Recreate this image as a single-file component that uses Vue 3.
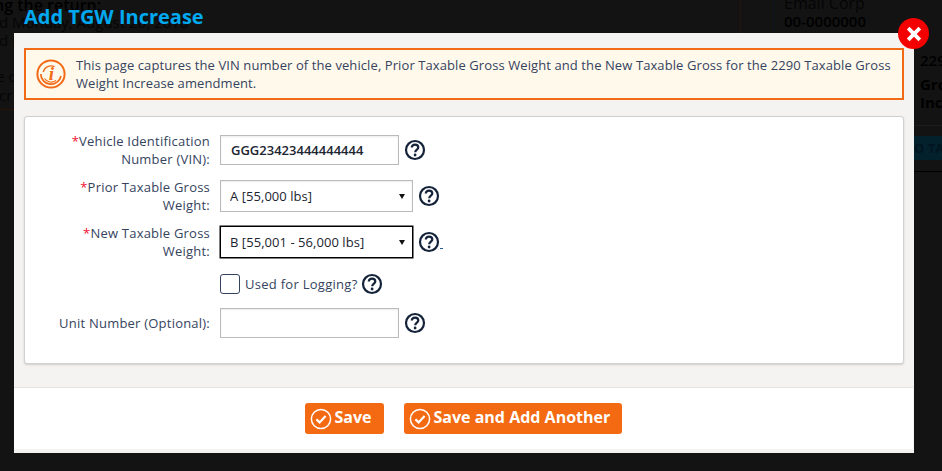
<template>
  <div class="page">
    <!-- dimmed page behind the dialog -->
    <div class="backdrop">
      <p class="bg-text bg-return">ng the return:</p>
      <p class="bg-text bg-date1">d Monday, August 20, 2018</p>
      <p class="bg-text bg-date2">d M</p>
      <p class="bg-text bg-line1">e c</p>
      <p class="bg-text bg-line2">cr</p>
      <div class="bg-rule"></div>
      <div class="bg-rule bg-rule-right"></div>
      <div class="bg-rule bg-rule-right2"></div>
      <div class="bg-divider"></div>
      <div class="bg-divider2"></div>
      <p class="bg-text bg-corp">Email Corp</p>
      <p class="bg-text bg-ein">00-0000000</p>
      <p class="bg-text bg-2290">2290</p>
      <p class="bg-text bg-gro">Gro</p>
      <p class="bg-text bg-inc">Incr</p>
      <div class="bg-btn">O TA</div>
    </div>

    <h1 class="title">Add TGW Increase</h1>

    <div class="modal">
      <button class="close" aria-label="Close">
        <svg width="16" height="16" viewBox="0 0 16 16">
          <path d="M2.2 2.2 L13.8 13.8 M13.8 2.2 L2.2 13.8" stroke="#fff" stroke-width="3.8" fill="none" />
        </svg>
      </button>

      <div class="modal-body">
        <div class="alert">
          <svg class="alert-icon" width="30" height="32" viewBox="0 0 30 32">
            <circle cx="15" cy="16" r="13.6" fill="none" stroke="#f26a16" stroke-width="2" />
            <path d="M4.8 16 A10.2 10.2 0 0 0 25 18" fill="none" stroke="#f26a16" stroke-width="1.7" />
            <path d="M7.2 14 A8.2 8.2 0 0 1 18.5 8.6" fill="none" stroke="#f26a16" stroke-width="1.3" />
            <path d="M8.5 20.5 A8 8 0 0 0 20 22.5" fill="none" stroke="#f26a16" stroke-width="1.1" />
            <text x="15.5" y="22" text-anchor="middle" class="alert-i">i</text>
          </svg>
          <p class="alert-text">This page captures the VIN number of the vehicle, Prior Taxable Gross Weight and the New Taxable Gross for the 2290 Taxable Gross Weight Increase amendment.</p>
        </div>

        <div class="panel">
          <div class="row row-vin">
            <label class="label"><span class="req">*</span>Vehicle Identification Number (VIN):</label>
            <input class="field field-input vin" type="text" value="GGG23423444444444" />
            <svg class="help" viewBox="0 0 22 22"><use href="#help-icon" /></svg>
          </div>

          <div class="row row-select row-prior">
            <label class="label"><span class="req">*</span>Prior Taxable Gross Weight:</label>
            <select class="field field-select">
              <option v-for="w in weights" :key="w" :selected="w === weights[0]">{{ w }}</option>
            </select>
            <svg class="help" viewBox="0 0 22 22"><use href="#help-icon" /></svg>
          </div>

          <div class="row row-select">
            <label class="label"><span class="req">*</span>New Taxable Gross Weight:</label>
            <select class="field field-select focused">
              <option v-for="w in weights" :key="w" :selected="w === weights[1]">{{ w }}</option>
            </select>
            <svg class="help" viewBox="0 0 22 22"><use href="#help-icon" /></svg>
            <span class="stray">&nbsp;</span>
          </div>

          <div class="row row-check">
            <span class="label"></span>
            <span class="checkbox"></span>
            <span class="check-label">Used for Logging?</span>
            <svg class="help" viewBox="0 0 22 22"><use href="#help-icon" /></svg>
          </div>

          <div class="row row-unit">
            <label class="label">Unit Number (Optional):</label>
            <input class="field field-input" type="text" />
            <svg class="help" viewBox="0 0 22 22"><use href="#help-icon" /></svg>
          </div>
        </div>
      </div>

      <div class="footer">
        <button class="btn btn-save">
          <svg class="btn-icon" viewBox="0 0 22 22"><use href="#ok-icon" /></svg><span class="btn-text">Save</span>
        </button>
        <button class="btn btn-another">
          <svg class="btn-icon" viewBox="0 0 22 22"><use href="#ok-icon" /></svg><span class="btn-text">Save and Add Another</span>
        </button>
      </div>
    </div>

    <!-- shared icons -->
    <svg class="defs" width="0" height="0">
      <defs>
        <g id="help-icon">
          <circle cx="11" cy="11" r="9" fill="#fff" stroke="#14233a" stroke-width="2.2" />
          <path d="M7.8 8.6 C7.8 6.7 9.3 5.6 11 5.6 C12.9 5.6 14.3 6.8 14.3 8.4 C14.3 10.5 11.2 10.6 11.2 13.2" fill="none" stroke="#14233a" stroke-width="2.2" />
          <circle cx="11.1" cy="16" r="1.4" fill="#14233a" />
        </g>
        <g id="ok-icon">
          <circle cx="11" cy="11" r="9.6" fill="none" stroke="#fff" stroke-width="1.5" />
          <path d="M6.4 11.4 L9.6 14.4 L15.6 8" fill="none" stroke="#fff" stroke-width="2.2" />
        </g>
      </defs>
    </svg>
  </div>
</template>

<script setup>
const weights = ['A [55,000 lbs]', 'B [55,001 - 56,000 lbs]']
</script>

<style>
html, body {
  margin: 0;
  background: #131313;
}
</style>

<style scoped>
.page {
  position: relative;
  width: 942px;
  height: 471px;
  overflow: hidden;
  background: #131313;
  font-family: "Open Sans", "DejaVu Sans", sans-serif;
  color: #2a3a52;
}

.backdrop {
  position: absolute;
  inset: 0;
}

.bg-text {
  position: absolute;
  margin: 0;
  font-size: 15px;
  line-height: 20px;
  white-space: nowrap;
  color: #050505;
}

.bg-return { left: -6px; top: -5px; font-size: 16px; font-weight: 600; color: #000; }
.bg-date1 { left: -1px; top: 12px; }
.bg-date2 { left: -1px; top: 30px; }
.bg-line1 { left: -4px; top: 66px; }
.bg-line2 { left: -1px; top: 85px; }
.bg-corp { left: 784px; top: -7px; font-size: 16px; }
.bg-ein { left: 784px; top: 11px; font-weight: 600; color: #000; }
.bg-2290 { left: 920px; top: 50px; font-weight: 600; color: #000; }
.bg-gro { left: 920px; top: 74px; font-weight: 700; color: #000; }
.bg-inc { left: 920px; top: 92px; font-weight: 700; color: #000; }

.bg-rule {
  position: absolute;
  left: 0;
  top: 109px;
  width: 14px;
  height: 1px;
  background: #2a1206;
}

.bg-rule-right {
  left: 914px;
  top: 125px;
  width: 28px;
  background: #1d1d1d;
}

.bg-rule-right2 {
  left: 914px;
  top: 171px;
  width: 28px;
  background: #000;
}

.bg-divider {
  position: absolute;
  left: 740px;
  top: 0;
  width: 1px;
  height: 33px;
  background: #24140a;
}

.bg-divider2 {
  position: absolute;
  left: 773px;
  top: 0;
  width: 1px;
  height: 33px;
  background: #0a1320;
}

.bg-btn {
  position: absolute;
  left: 914px;
  top: 136px;
  width: 28px;
  height: 24px;
  background: #03202d;
  color: #02151f;
  font-size: 13px;
  font-weight: 700;
  line-height: 24px;
  white-space: nowrap;
  overflow: hidden;
}

.title {
  position: relative;
  height: 33px;
  margin: 0;
  padding: 4px 0 0 24px;
  box-sizing: border-box;
  font-size: 20px;
  line-height: 26px;
  font-weight: 700;
  color: #00a8f0;
}

.modal {
  position: relative;
  width: 900px;
  height: 420px;
  margin-left: 14px;
  display: flex;
  flex-direction: column;
  background: #f4f3f1;
}

.close {
  position: absolute;
  right: -15px;
  top: -15px;
  width: 31px;
  height: 31px;
  padding: 0;
  border: 0;
  border-radius: 50%;
  background: #f50000;
  display: flex;
  align-items: center;
  justify-content: center;
}

.modal-body {
  flex: 1;
  padding: 15px 10px 0;
}

.alert {
  display: flex;
  align-items: center;
  gap: 10px;
  height: 52px;
  box-sizing: border-box;
  padding: 0 9px 0 10px;
  border: 2px solid #f26a16;
  background: #fff9ec;
}

.alert-icon {
  flex: none;
}

.alert-i {
  font-family: "Liberation Serif", serif;
  font-size: 19px;
  font-weight: 700;
  font-style: italic;
  fill: #f26a16;
}

.alert-text {
  margin: 0;
  font-size: 13px;
  line-height: 18px;
  letter-spacing: 0.09px;
  color: #35435e;
}

.panel {
  margin-top: 16px;
  height: 248px;
  box-sizing: border-box;
  padding: 18px 0 0 25px;
  background: #fff;
  border: 1px solid #d0d0d0;
  border-radius: 3px;
  box-shadow: 0 1px 2px rgba(0, 0, 0, 0.15);
}

.row {
  display: flex;
  align-items: center;
}

.row-vin { height: 30px; }
.row-select { height: 32px; margin-top: 14px; }
.row-prior { margin-top: 15px; }
.row-check { height: 20px; margin-top: 16px; }
.row-unit { height: 30px; margin-top: 14px; }

.label {
  flex: none;
  width: 160px;
  margin-right: 10px;
  text-align: right;
  font-size: 13px;
  line-height: 18px;
  letter-spacing: 0.22px;
  color: #35435e;
}

.req {
  color: #f01030;
}

.field {
  box-sizing: border-box;
  margin: 0;
  font-family: inherit;
  font-size: 13px;
  letter-spacing: 0.05px;
  color: #1c2430;
  background: #fff;
  border: 1px solid #bbb;
  border-radius: 0;
  outline: none;
  box-shadow: inset 0 1px 2px rgba(0, 0, 0, 0.08);
}

.field-input {
  width: 179px;
  height: 30px;
  padding: 0 10px;
}

.vin {
  font-weight: 600;
  letter-spacing: 0;
}

.field-select {
  width: 193px;
  height: 32px;
  padding: 0 9px;
  appearance: none;
  background: #fff url("data:image/svg+xml,%3Csvg xmlns='http://www.w3.org/2000/svg' width='6' height='5'%3E%3Cpath d='M0 0H6L3 5z' fill='%23111'/%3E%3C/svg%3E") no-repeat right 7px center;
}

.focused {
  border: 1px solid #000;
  box-shadow: 0 0 0 0.5px #000;
}

.help {
  flex: none;
  width: 22px;
  height: 22px;
  margin-left: 5px;
}

.stray {
  align-self: flex-end;
  height: 1px;
  width: 3px;
  margin: 0 0 9px 0;
  background: #2a5a9a;
  overflow: hidden;
}

.checkbox {
  flex: none;
  width: 20px;
  height: 20px;
  box-sizing: border-box;
  border: 1px solid #35435e;
  border-radius: 3px;
  background: #fff;
}

.check-label {
  margin-left: 5px;
  font-size: 13px;
  letter-spacing: 0.28px;
  color: #35435e;
}

.row-check .help {
  margin-left: 3px;
}

.footer {
  height: 62px;
  margin-bottom: 4px;
  margin-right: 1px;
  box-sizing: border-box;
  display: flex;
  justify-content: center;
  gap: 20px;
  padding-top: 15px;
  padding-right: 1px;
  background: #fff;
  border-top: 1px solid #e2e2e2;
}

.btn {
  display: flex;
  align-items: center;
  height: 31px;
  box-sizing: border-box;
  padding: 0 0 0 5px;
  border: 0;
  border-radius: 3px;
  background: #f46a12;
  color: #fff;
  font-family: inherit;
  font-size: 16px;
  font-weight: 700;
}

.btn-text {
  padding-bottom: 3px;
}

.btn-save { width: 79px; }
.btn-another { width: 218px; }

.btn-icon {
  flex: none;
  width: 22px;
  height: 22px;
  margin-right: 3px;
}

.defs {
  position: absolute;
}
</style>
